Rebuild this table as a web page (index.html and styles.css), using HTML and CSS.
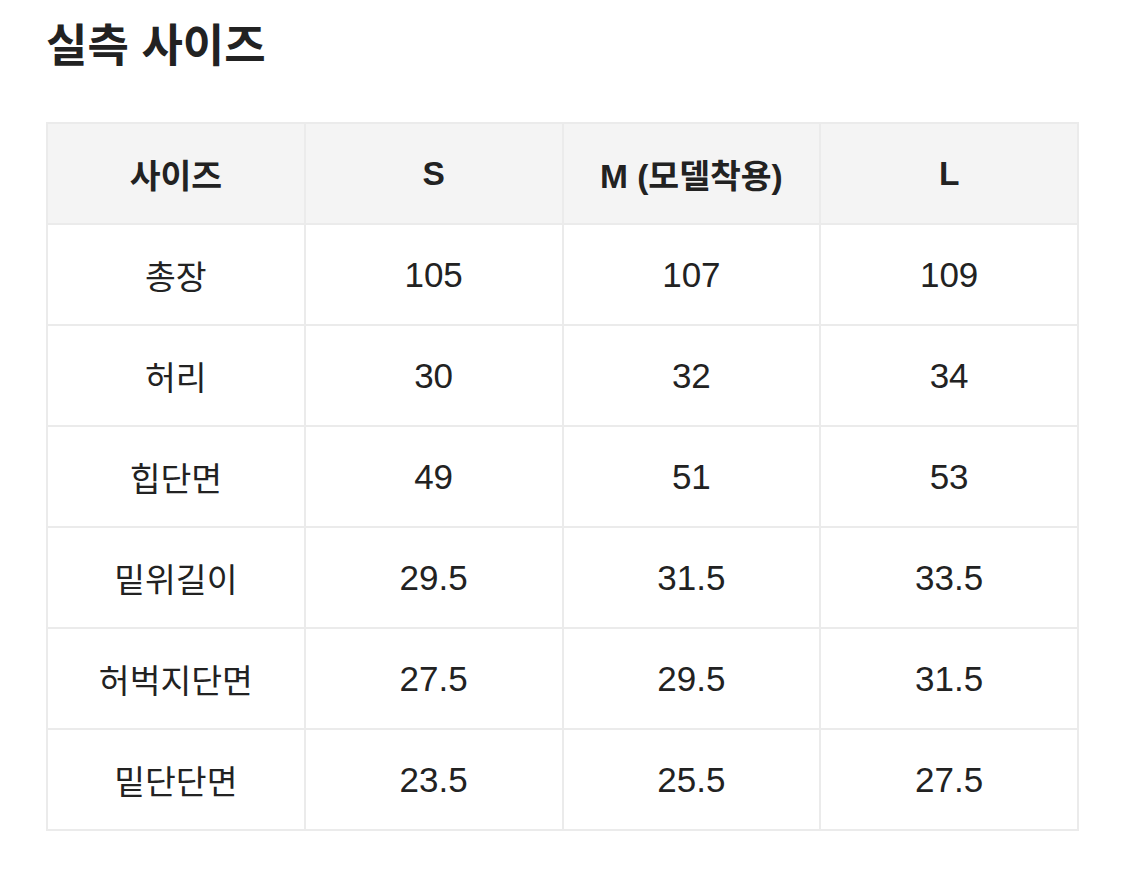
FILE: index.html
```html
<!DOCTYPE html>
<html lang="ko">
<head>
<meta charset="utf-8">
<link rel="stylesheet" href="styles.css">
</head>
<body>
<main class="page">
  <h1 class="title">실측 사이즈</h1>
  <table class="size-table">
    <thead>
      <tr><th>사이즈</th><th>S</th><th>M (모델착용)</th><th>L</th></tr>
    </thead>
    <tbody>
      <tr><td>총장</td><td class="num">105</td><td class="num">107</td><td class="num">109</td></tr>
      <tr><td>허리</td><td class="num">30</td><td class="num">32</td><td class="num">34</td></tr>
      <tr><td>힙단면</td><td class="num">49</td><td class="num">51</td><td class="num">53</td></tr>
      <tr><td>밑위길이</td><td class="num">29.5</td><td class="num">31.5</td><td class="num">33.5</td></tr>
      <tr><td>허벅지단면</td><td class="num">27.5</td><td class="num">29.5</td><td class="num">31.5</td></tr>
      <tr><td>밑단단면</td><td class="num">23.5</td><td class="num">25.5</td><td class="num">27.5</td></tr>
    </tbody>
  </table>
</main>
</body>
</html>
```

FILE: styles.css
```css
html, body {
  margin: 0;
  padding: 0;
  background: #ffffff;
}
body {
  font-family: "Liberation Sans", "Noto Sans CJK KR", sans-serif;
  color: #222222;
}
.page {
  padding: 14px 46px 0 46px;
}
.title {
  margin: 0;
  font-family: "Noto Sans CJK KR", sans-serif;
  font-size: 45px;
  font-weight: 700;
  line-height: 58px;
  color: #222222;
}
.size-table {
  margin-top: 50px;
  width: 1033px;
  border-collapse: collapse;
  table-layout: fixed;
}
.size-table th,
.size-table td {
  border: 2px solid #ebebeb;
  height: 99px;
  padding: 0;
  text-align: center;
  vertical-align: middle;
  font-size: 33.5px;
  color: #222222;
}
.size-table th {
  background: #f4f4f4;
  font-weight: 700;
}
.size-table td {
  font-weight: 400;
}
.size-table td.num {
  font-size: 35px;
}
```
